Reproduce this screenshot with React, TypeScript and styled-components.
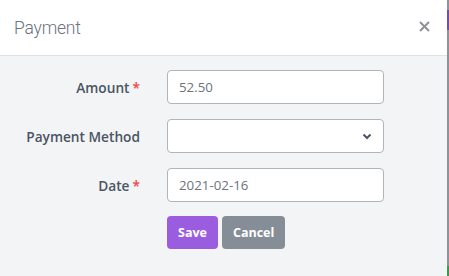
import React from "react";
import styled, { createGlobalStyle } from "styled-components";

const Global = createGlobalStyle`
  html, body { margin: 0; padding: 0; background: #7d8489; }
  * { box-sizing: border-box; }
  #root { width: 449px; height: 276px; }
`;

const Stage = styled.div`
  display: flex;
  width: 449px;
  height: 276px;
  background: #8a9095;
`;

const Modal = styled.div`
  width: 447px;
  height: 276px;
  display: flex;
  flex-direction: column;
  background: #f3f4f6;
`;

const EdgeStrip = styled.div`
  width: 2px;
  display: flex;
  flex-direction: column;
  background: #8d9398;
`;

const EdgeMark = styled.div<{ $color: string; $h: number }>`
  height: ${(p) => p.$h}px;
  background: ${(p) => p.$color};
`;

const Header = styled.div`
  height: 56px;
  flex: none;
  background: #ffffff;
  border-bottom: 1px solid #dee2e6;
  display: flex;
  align-items: center;
  justify-content: space-between;
  padding: 0 17px 0 14px;
`;

const Title = styled.h5`
  margin: 0;
  font-family: Roboto, "Liberation Sans", sans-serif;
  font-weight: 300;
  font-size: 17.5px;
  letter-spacing: -0.2px;
  color: #6b7280;
  padding-top: 1px;
`;

const Close = styled.button`
  border: 0;
  background: transparent;
  padding: 0;
  width: 12px;
  height: 12px;
  display: flex;
  align-items: center;
  justify-content: center;
  color: #8e9296;
  margin-top: -3px;
`;

const Body = styled.div`
  display: grid;
  grid-template-columns: 140px 217px;
  column-gap: 27px;
  row-gap: 15px;
  padding: 14px 0 0 0;
  align-items: center;
`;

const Label = styled.label`
  text-align: right;
  font-family: "Open Sans", "Noto Sans", sans-serif;
  font-weight: 600;
  font-size: 13.7px;
  color: #4b5563;
`;

const Req = styled.span`
  color: #ef4444;
  margin-left: 3px;
`;

const Field = styled.div`
  height: 34px;
  background: #ffffff;
  border: 1px solid #adb5bd;
  border-radius: 4px;
  display: flex;
  align-items: center;
  justify-content: space-between;
  padding: 0 11px 0 11px;
  font-family: "Open Sans", "Noto Sans", sans-serif;
  font-size: 13.3px;
  color: #6b7280;
`;

const Actions = styled.div`
  grid-column: 2;
  display: flex;
  gap: 4px;
  margin-top: -1px;
`;

const Btn = styled.button<{ $bg: string }>`
  height: 33px;
  border: 0;
  border-radius: 4px;
  background: ${(p) => p.$bg};
  color: #ffffff;
  font-family: "Open Sans", "Noto Sans", sans-serif;
  font-weight: 700;
  font-size: 12.5px;
  padding: 0 11px;
`;

export default function App() {
  return (
    <>
      <Global />
      <Stage>
        <Modal>
          <Header>
            <Title>Payment</Title>
            <Close aria-label="close">
              <svg width="11" height="11" viewBox="0 0 11 11">
                <path d="M1 1L10 10M10 1L1 10" stroke="currentColor" strokeWidth="2" />
              </svg>
            </Close>
          </Header>
          <Body>
            <Label>
              Amount<Req>*</Req>
            </Label>
            <Field>52.50</Field>
            <Label>Payment Method</Label>
            <Field>
              <span />
              <svg width="10" height="7" viewBox="0 0 10 7">
                <path d="M1.5 1.5L5 5L8.5 1.5" stroke="#4b5563" strokeWidth="2" fill="none" />
              </svg>
            </Field>
            <Label>
              Date<Req>*</Req>
            </Label>
            <Field>2021-02-16</Field>
            <Actions>
              <Btn $bg="#9b5de0">Save</Btn>
              <Btn $bg="#858e96">Cancel</Btn>
            </Actions>
          </Body>
        </Modal>
        <EdgeStrip>
          <EdgeMark $color="#8d9398" $h={10} />
          <EdgeMark $color="#6f4fa8" $h={20} />
          <EdgeMark $color="#8d9398" $h={236} />
          <EdgeMark $color="#3a9a4a" $h={10} />
        </EdgeStrip>
      </Stage>
    </>
  );
}
